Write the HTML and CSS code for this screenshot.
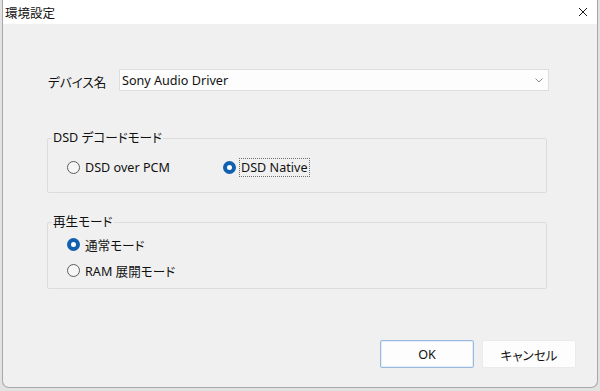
FILE: index.html
```html
<!DOCTYPE html>
<html lang="ja">
<head>
    <meta charset="UTF-8">
    <meta name="viewport" content="width=device-width, initial-scale=1.0">
    <title>環境設定</title>
    <link rel="stylesheet" href="styles.css">
</head>
<body>

<div class="window">
    <div class="titlebar">
        <span class="title">環境設定</span>
        <span class="close">
            <svg width="10" height="10" viewBox="0 0 10 10">
                <path d="M1 1 L9 9 M9 1 L1 9" stroke="#1a1a1a" stroke-width="1" fill="none"/>
            </svg>
        </span>
    </div>

    <div class="content">
        <div class="device-row">
            <span class="device-label">デバイス名</span>
            <div class="combo">
                <span>Sony Audio Driver</span>
                <svg width="8" height="5" viewBox="0 0 8 5">
                    <path d="M0.5 0.5 L4 4 L7.5 0.5" stroke="#8a8a8a" stroke-width="1" fill="none"/>
                </svg>
            </div>
        </div>

        <fieldset class="group group-dsd">
            <legend>DSD デコードモード</legend>
            <div class="options options-row">
                <div class="option option-wide"><span class="radio"></span><span class="opt-text">DSD over PCM</span></div>
                <div class="option"><span class="radio checked"></span><span class="opt-text focused">DSD Native</span></div>
            </div>
        </fieldset>

        <fieldset class="group group-play">
            <legend>再生モード</legend>
            <div class="options options-col">
                <div class="option"><span class="radio checked"></span><span class="opt-text">通常モード</span></div>
                <div class="option"><span class="radio"></span><span class="opt-text">RAM 展開モード</span></div>
            </div>
        </fieldset>

        <div class="buttons">
            <button class="btn btn-default">OK</button>
            <button class="btn">キャンセル</button>
        </div>
    </div>
</div>

</body>
</html>
```

FILE: styles.css
```css
body {
    margin: 0;
    background-color: #e2e2e2;
    font-family: 'Noto Sans', 'Noto Sans CJK JP', sans-serif;
    font-size: 12.6px;
    color: #111;
    font-feature-settings: "palt";
}

.window {
    margin-left: 2px;
    width: 594px;
    height: 387px;
    background-color: #f0f0f0;
    border: 1px solid #a8a8a8;
    border-top: none;
    border-radius: 0 0 7px 7px;
    overflow: hidden;
}

.titlebar {
    height: 24px;
    background-color: #fff;
    display: flex;
    align-items: center;
    justify-content: space-between;
}

.title {
    padding-left: 2px;
    font-size: 12.5px;
    font-family: 'Noto Sans CJK JP', sans-serif;
    font-feature-settings: normal;
}

.close {
    display: flex;
    margin-right: 9px;
}

.content {
    padding: 0 48px 0 44px;
}

.device-row {
    display: flex;
    align-items: center;
    margin-top: 45px;
}

.device-label {
    width: 71px;
    padding-left: 1px;
    padding-top: 3px;
}

.combo {
    width: 430px;
    height: 22px;
    background-color: #fdfdfd;
    border: 1px solid #dedede;
    display: flex;
    align-items: center;
    justify-content: space-between;
    padding: 0 5px 0 2px;
    box-sizing: border-box;
}

.combo svg {
    margin-top: 1px;
}

.group {
    margin: 0;
    padding: 0;
    width: 500px;
    box-sizing: border-box;
    border: 1px solid #dcdcdc;
    border-radius: 2px;
}

.group legend {
    padding: 0 1px;
    margin-left: 4px;
    line-height: 16px;
}

.group-dsd {
    margin-top: 39px;
}

.group-play {
    margin-top: 21px;
}

.options {
    padding-left: 19px;
}

.options-row {
    display: flex;
    padding-top: 12px;
    padding-bottom: 16px;
}

.options-col {
    display: flex;
    flex-direction: column;
    gap: 8px;
    padding-top: 5px;
    padding-bottom: 9px;
}

.option {
    display: flex;
    align-items: center;
    height: 18px;
}

.option-wide {
    width: 156px;
}

.radio {
    width: 11px;
    height: 11px;
    border: 1px solid #5c5c5c;
    border-radius: 50%;
    background-color: #f6f6f6;
}

.radio.checked {
    width: 5px;
    height: 5px;
    border: 4px solid #1160b0;
    background-color: #fff;
}

.opt-text {
    margin-left: 3px;
    padding: 0 1px;
    border: 1px dotted transparent;
}

.opt-text.focused {
    border-color: #6e6e6e;
}

.buttons {
    display: flex;
    justify-content: flex-end;
    gap: 8px;
    margin-top: 51px;
    margin-right: -27px;
}

.btn {
    width: 94px;
    height: 28px;
    background-color: #fdfdfd;
    border: 1px solid #ebebeb;
    border-radius: 2px;
    font-family: 'Noto Sans', 'Noto Sans CJK JP', sans-serif;
    font-size: 12.6px;
    color: #111;
    font-feature-settings: "palt";
}

.btn-default {
    border-color: #98b9dd;
    box-shadow: inset 0 0 0 1px #e4eef8;
}
```
